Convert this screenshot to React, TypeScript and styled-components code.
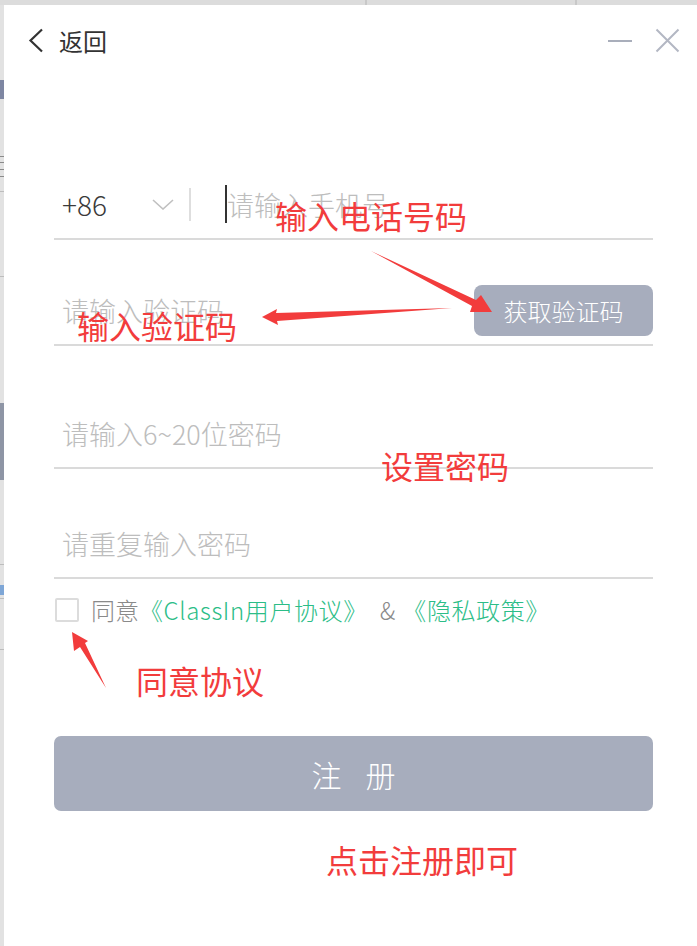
import React from "react";
import styled, { createGlobalStyle } from "styled-components";

const GlobalStyle = createGlobalStyle`
  html, body { margin: 0; padding: 0; }
  body {
    font-family: "Noto Sans CJK SC", "Noto Sans", sans-serif;
    background: #ffffff;
  }
  * { box-sizing: border-box; }
`;

const Page = styled.div`
  position: relative;
  width: 697px;
  height: 946px;
  overflow: hidden;
  display: flex;
  flex-direction: column;
  background: #e2e2e2;
`;

const TopStrip = styled.div`
  height: 5px;
  flex-shrink: 0;
  background: linear-gradient(
    to right,
    #dcdcdc 0 365px,
    #c8c8c8 365px 367px,
    #dcdcdc 367px 575px,
    #c8c8c8 575px 577px,
    #dcdcdc 577px
  );
`;

const Main = styled.div`
  flex: 1;
  display: flex;
  min-height: 0;
`;

const SideStrip = styled.div`
  width: 4px;
  flex-shrink: 0;
  background: linear-gradient(
    to bottom,
    #e2e2e2 0 75px,
    #7e86a2 75px 94px,
    #e2e2e2 94px 151px,
    #8a8a8a 151px 152px,
    #e2e2e2 152px 157px,
    #8a8a8a 157px 158px,
    #e2e2e2 158px 164px,
    #8a8a8a 164px 165px,
    #e2e2e2 165px 171px,
    #8a8a8a 171px 172px,
    #e2e2e2 172px 186px,
    #bdbdbd 186px 187px,
    #e2e2e2 187px 271px,
    #bdbdbd 271px 272px,
    #e2e2e2 272px 398px,
    #8e95a5 398px 475px,
    #e2e2e2 475px 559px,
    #bdbdbd 559px 560px,
    #e2e2e2 560px 580px,
    #7ea6d6 580px 590px,
    #e2e2e2 590px 593px,
    #bdbdbd 593px 594px,
    #e2e2e2 594px 644px,
    #bdbdbd 644px 645px,
    #e2e2e2 645px
  );
`;

const Dialog = styled.div`
  flex: 1;
  background: #ffffff;
  display: flex;
  flex-direction: column;
  padding-top: 23px;
`;

const Header = styled.div`
  display: flex;
  align-items: center;
  height: 25px;
  padding: 0 17px 0 24px;
`;

const BackButton = styled.div`
  display: flex;
  align-items: center;
  gap: 15px;
  font-size: 24px;
  line-height: 1;
  color: #333333;
`;

const WindowControls = styled.div`
  margin-left: auto;
  display: flex;
  align-items: center;
  gap: 23px;
`;

const MinimizeBar = styled.div`
  width: 24px;
  height: 2px;
  background: #a9aebb;
`;

const Form = styled.div`
  display: flex;
  flex-direction: column;
  margin-top: 117px;
  padding: 0 44px 0 50px;
`;

const Field = styled.div<{ $gap: number }>`
  display: flex;
  align-items: center;
  height: 70px;
  margin-top: ${(p) => p.$gap}px;
  border-bottom: 2px solid #dadada;
`;

const Country = styled.div`
  display: flex;
  align-items: center;
  justify-content: space-between;
  width: 135px;
  padding: 0 15px 0 8px;
  font-size: 28px;
  font-weight: 300;
  line-height: 1;
  color: #3a3a3a;
`;

const Divider = styled.div`
  width: 2px;
  height: 33px;
  background: #dedede;
`;

const Caret = styled.div`
  width: 2px;
  height: 38px;
  margin-left: 34px;
  background: #333333;
`;

const TextInput = styled.input<{ $pad: number }>`
  flex: 1;
  min-width: 0;
  border: none;
  outline: none;
  background: transparent;
  font-family: inherit;
  font-size: 27px;
  font-weight: 300;
  color: #333333;
  padding: 0 0 0 ${(p) => p.$pad}px;
  &::placeholder {
    color: #bdbdbd;
  }
`;

const CodeButton = styled.button`
  flex-shrink: 0;
  width: 179px;
  height: 51px;
  border: none;
  border-radius: 8px;
  background: #a7adbd;
  color: #ffffff;
  font-family: inherit;
  font-size: 24px;
  font-weight: 300;
  padding: 0;
`;

const Agreement = styled.div`
  display: flex;
  align-items: center;
  height: 24px;
  margin-top: 19px;
  font-size: 24px;
  font-weight: 300;
  line-height: 1;
  color: #8a8a8a;
  white-space: pre;
`;

const CheckBox = styled.div`
  width: 24px;
  height: 24px;
  margin: 0 12px 0 1px;
  border: 2px solid #dcdcdc;
  border-radius: 2px;
`;

const Link = styled.span`
  color: #2cbd87;
  letter-spacing: 0.6px;
`;

const Ampersand = styled.span`
  padding: 0 7px 0 12px;
`;

const RegisterButton = styled.button`
  margin-top: 114px;
  height: 75px;
  border: none;
  border-radius: 7px;
  background: #a7adbd;
  color: #ffffff;
  font-family: inherit;
  font-size: 30px;
  font-weight: 300;
  letter-spacing: 24px;
  padding: 0 0 0 24px;
`;

const Annotation = styled.div<{ $x: number; $y: number }>`
  position: absolute;
  left: ${(p) => p.$x}px;
  top: ${(p) => p.$y}px;
  font-size: 32px;
  line-height: 1;
  color: #f23c3c;
  white-space: nowrap;
  pointer-events: none;
`;

const ArrowLayer = styled.svg`
  position: absolute;
  left: 0;
  top: 0;
  width: 697px;
  height: 946px;
  pointer-events: none;
`;

export default function App() {
  return (
    <>
      <GlobalStyle />
      <Page>
        <TopStrip />
        <Main>
          <SideStrip />
          <Dialog>
            <Header>
              <BackButton>
                <svg width="16" height="25" viewBox="0 0 16 25">
                  <polyline
                    points="14,1.5 2.5,12.5 14,23.5"
                    fill="none"
                    stroke="#333"
                    strokeWidth="2.2"
                  />
                </svg>
                <span>返回</span>
              </BackButton>
              <WindowControls>
                <MinimizeBar />
                <svg width="25" height="25" viewBox="0 0 25 25">
                  <path
                    d="M1.5 1.5 L23.5 23.5 M23.5 1.5 L1.5 23.5"
                    stroke="#b3b7c3"
                    strokeWidth="2"
                  />
                </svg>
              </WindowControls>
            </Header>

            <Form>
              <Field $gap={0}>
                <Country>
                  <span>+86</span>
                  <svg width="22" height="11" viewBox="0 0 22 11">
                    <polyline
                      points="1,1 11,10 21,1"
                      fill="none"
                      stroke="#c0c0c0"
                      strokeWidth="1.6"
                    />
                  </svg>
                </Country>
                <Divider />
                <Caret />
                <TextInput $pad={0} placeholder="请输入手机号" />
              </Field>
              <Field $gap={36}>
                <TextInput $pad={8} placeholder="请输入验证码" />
                <CodeButton>获取验证码</CodeButton>
              </Field>
              <Field $gap={53}>
                <TextInput $pad={8} type="password" placeholder="请输入6~20位密码" />
              </Field>
              <Field $gap={40}>
                <TextInput $pad={8} type="password" placeholder="请重复输入密码" />
              </Field>

              <Agreement>
                <CheckBox />
                <span>同意</span>
                <Link>《ClassIn用户协议》</Link>
                <Ampersand>&amp;</Ampersand>
                <Link>《隐私政策》</Link>
              </Agreement>

              <RegisterButton>注册</RegisterButton>
            </Form>
          </Dialog>
        </Main>

        <Annotation $x={275} $y={199}>输入电话号码</Annotation>
        <Annotation $x={77} $y={309}>输入验证码</Annotation>
        <Annotation $x={381} $y={449}>设置密码</Annotation>
        <Annotation $x={136} $y={664}>同意协议</Annotation>
        <Annotation $x={326} $y={843}>点击注册即可</Annotation>

        <ArrowLayer viewBox="0 0 697 946">
          <polygon
            points="371,251 476,300 481,295 492,312 470,312 472,306"
            fill="#f23c3c"
          />
          <polygon
            points="262,317 277,309 276,313 452,308 277,321 278,325"
            fill="#f23c3c"
          />
          <polygon
            points="72,632 88,641 85,643 106,688 80,647 74,651"
            fill="#f23c3c"
          />
        </ArrowLayer>
      </Page>
    </>
  );
}
